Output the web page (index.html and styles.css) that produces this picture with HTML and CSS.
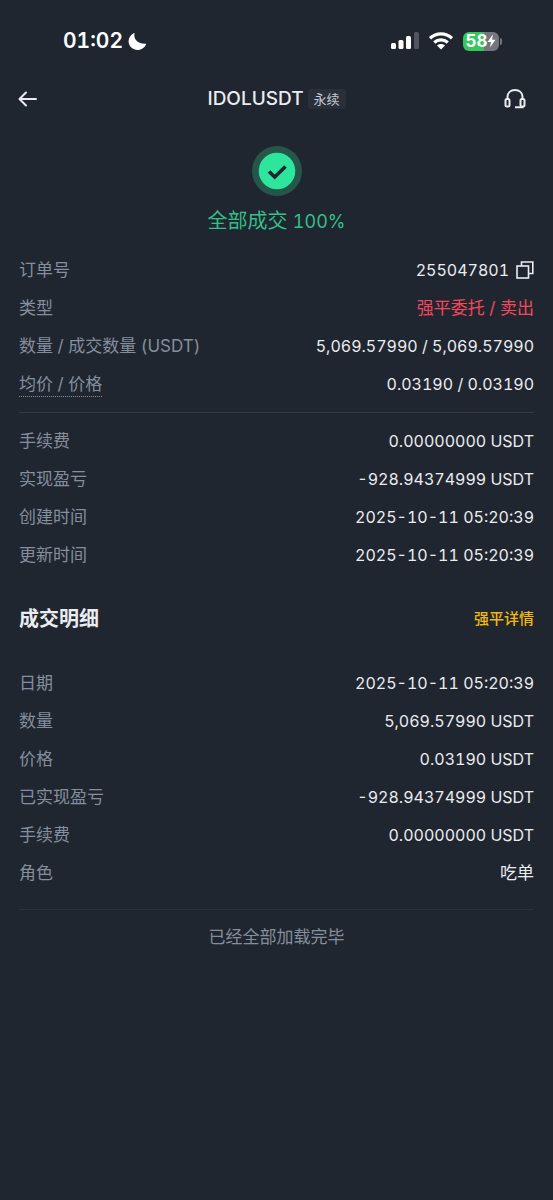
FILE: index.html
```html
<!DOCTYPE html>
<html lang="zh-CN">
<head>
<meta charset="utf-8">
<meta name="viewport" content="width=device-width, initial-scale=1">
<title>IDOLUSDT 永续</title>
<link rel="stylesheet" href="styles.css">
</head>
<body>
<div class="status-bar">
  <div class="clock">
    <span>01:02</span>
    <svg width="19" height="19" viewBox="0 0 19 19" aria-hidden="true"><path fill="currentColor" d="M6.600 1C5.200 6.500 9 12.300 18.300 11.700C16.800 15.600 13.500 18 9.600 18C4.800 18 .6 14.300 .6 9.600C.6 5.700 3 2.300 6.600 1Z"/></svg>
  </div>
  <div class="indicators">
    <svg width="28" height="18" viewBox="0 0 28 18" aria-hidden="true"><g fill="#fff"><rect x="0" y="11" width="5" height="6" rx="1.500"/><rect x="7.500" y="8" width="5" height="9" rx="1.500"/><rect x="15" y="4" width="5" height="13" rx="1.500"/></g><rect x="23" y="0" width="5" height="17" rx="1.500" fill="#50555e"/></svg>
    <svg width="26" height="18" viewBox="0 0 26 18" aria-hidden="true"><g fill="none" stroke="#fff" stroke-width="3.200"><path d="M2 6.300C8.300 .5 17.700 .5 24 6.300"/><path d="M6.200 10.500C10.100 7 15.900 7 19.800 10.500"/></g><path fill="#fff" d="M9 13.500C11.300 11.500 14.700 11.500 17 13.500L13 17.500Z"/></svg>
    <div class="battery">
      <span>58</span>
      <svg width="9" height="14" viewBox="0 0 9 14" aria-hidden="true"><path fill="#fff" d="M5.800 .5L.5 8H4L3 13.500L8.500 5.800H5.100Z"/></svg>
    </div>
  </div>
</div>

<header class="nav">
  <button class="icon-button" type="button" aria-label="返回">
    <svg width="20" height="18" viewBox="0 0 20 18" aria-hidden="true"><path fill="none" stroke="currentColor" stroke-width="2" stroke-linecap="round" stroke-linejoin="round" d="M18 9H1.500M8 2.500L1.500 9L8 15.500"/></svg>
  </button>
  <div class="pair">
    <h1>IDOLUSDT</h1>
    <span class="tag">永续</span>
  </div>
  <button class="icon-button end" type="button" aria-label="客服">
    <svg width="24" height="22" viewBox="0 0 24 22" aria-hidden="true"><g fill="none" stroke="currentColor" stroke-width="2"><path d="M4.500 11V9C4.500 4.700 7.700 2 12 2S19.500 4.700 19.500 9V11"/><rect x="2.500" y="11" width="4" height="7.500" rx="1.500"/><rect x="17.500" y="11" width="4" height="7.500" rx="1.500"/><path d="M19.500 18.500V19.200H12"/></g></svg>
  </button>
</header>

<main>
  <section class="result">
    <svg width="50" height="50" viewBox="0 0 50 50" aria-hidden="true"><circle cx="25" cy="25" r="25" fill="#265549"/><circle cx="25" cy="25" r="18.300" fill="#2ee59d"/><path fill="none" stroke="#202630" stroke-width="3.600" d="M17 25.500L22.700 31L33.500 20.500"/></svg>
    <p>全部成交 <span class="percent">100%</span></p>
  </section>

  <dl class="rows">
    <div class="row"><dt>订单号</dt><dd class="order">255047801
      <button class="copy" type="button" aria-label="复制"><svg width="18" height="18" viewBox="0 0 18 18" aria-hidden="true"><g fill="none" stroke="currentColor" stroke-width="1.600"><rect x="1" y="5" width="11.500" height="12"/><path d="M5.500 5V1H16.800V12.500H12.500"/></g></svg></button></dd></div>
    <div class="row"><dt>类型</dt><dd class="han sell">强平委托 / 卖出</dd></div>
    <div class="row"><dt>数量 / 成交数量 (USDT)</dt><dd>5,069.57990 / 5,069.57990</dd></div>
    <div class="row"><dt><span class="hint">均价 / 价格</span></dt><dd>0.03190 / 0.03190</dd></div>
  </dl>
  <hr class="divider">
  <dl class="rows">
    <div class="row"><dt>手续费</dt><dd>0.00000000 USDT</dd></div>
    <div class="row"><dt>实现盈亏</dt><dd>-928.94374999 USDT</dd></div>
    <div class="row"><dt>创建时间</dt><dd>2025-10-11 05:20:39</dd></div>
    <div class="row"><dt>更新时间</dt><dd>2025-10-11 05:20:39</dd></div>
  </dl>

  <div class="section-head">
    <h2>成交明细</h2>
    <a href="#details">强平详情</a>
  </div>
  <dl class="rows" id="details">
    <div class="row"><dt>日期</dt><dd>2025-10-11 05:20:39</dd></div>
    <div class="row"><dt>数量</dt><dd>5,069.57990 USDT</dd></div>
    <div class="row"><dt>价格</dt><dd>0.03190 USDT</dd></div>
    <div class="row"><dt>已实现盈亏</dt><dd>-928.94374999 USDT</dd></div>
    <div class="row"><dt>手续费</dt><dd>0.00000000 USDT</dd></div>
    <div class="row"><dt>角色</dt><dd class="han">吃单</dd></div>
  </dl>
  <hr class="divider faint">
  <p class="end-note">已经全部加载完毕</p>
</main>
</body>
</html>
```
FILE: styles.css
```css
* {
  box-sizing: border-box;
  margin: 0;
}

body {
  min-height: 100vh;
  background: #202630;
  color: #eaecef;
  font-family: Inter, "Noto Sans CJK SC", sans-serif;
  font-size: 16px;
  font-variant-numeric: tabular-nums;
  line-height: 26px;
}

svg {
  display: block;
}

button {
  padding: 0;
  border: 0;
  background: none;
  color: inherit;
  cursor: pointer;
}

.status-bar {
  display: flex;
  align-items: center;
  justify-content: space-between;
  height: 82px;
  padding: 0 51px 0 63px;
  color: #fff;
}

.clock {
  display: flex;
  align-items: center;
  gap: 5px;
  font-size: 21px;
  font-weight: 600;
}

.indicators {
  display: flex;
  align-items: center;
  gap: 9px;
}

.battery {
  position: relative;
  display: flex;
  align-items: center;
  justify-content: center;
  width: 36px;
  height: 19px;
  margin-right: 3px;
  border-radius: 6px;
  background: linear-gradient(90deg, #35c759 58%, #73767d 58%);
  font-size: 17px;
  font-weight: 700;
}

.battery::after {
  content: "";
  position: absolute;
  right: -3px;
  top: 6px;
  width: 2px;
  height: 7px;
  border-radius: 0 2px 2px 0;
  background: #73767d;
}

.nav {
  display: grid;
  grid-template-columns: 1fr auto 1fr;
  align-items: center;
  height: 34px;
  padding: 0 26px 0 18px;
}

.icon-button {
  justify-self: start;
}

.icon-button.end {
  justify-self: end;
}

.nav .pair {
  display: flex;
  align-items: center;
  gap: 4px;
  padding-left: 8px;
}

h1 {
  font-size: 19px;
  font-weight: 500;
}

.tag {
  padding: 0 6px;
  border-radius: 3px;
  background: #2a303a;
  color: #c4cad3;
  font-size: 13px;
  line-height: 20px;
}

main {
  padding: 30px 19px 0;
}

.result {
  display: flex;
  flex-direction: column;
  align-items: center;
  gap: 10px;
  margin-bottom: 20px;
  color: #34bf88;
  font-size: 20px;
  line-height: 30px;
}

.percent {
  font-size: 18px;
}

.rows {
  display: grid;
  gap: 12px;
}

.row {
  display: flex;
  align-items: baseline;
  justify-content: space-between;
  height: 26px;
}

dt {
  color: #848e9c;
  font-size: 17px;
}

.hint {
  padding-bottom: 2px;
  border-bottom: 1px dotted #848e9c;
}

.order {
  display: flex;
  align-items: center;
  gap: 7px;
}

.han {
  font-size: 17px;
}

.sell {
  color: #f6465d;
}

.divider {
  height: 1px;
  margin: 15px 0;
  border: 0;
  background: #333b47;
}

.section-head {
  display: flex;
  align-items: center;
  justify-content: space-between;
  margin: 37px 0;
}

h2 {
  font-size: 20px;
  font-weight: 700;
  line-height: 28px;
}

.section-head a {
  color: #f0b90b;
  font-size: 15px;
  font-weight: 500;
  text-decoration: none;
}

.divider.faint {
  margin: 23px 0 14px;
  background: #2a313b;
}

.end-note {
  color: #848e9c;
  font-size: 17px;
  text-align: center;
}
```
